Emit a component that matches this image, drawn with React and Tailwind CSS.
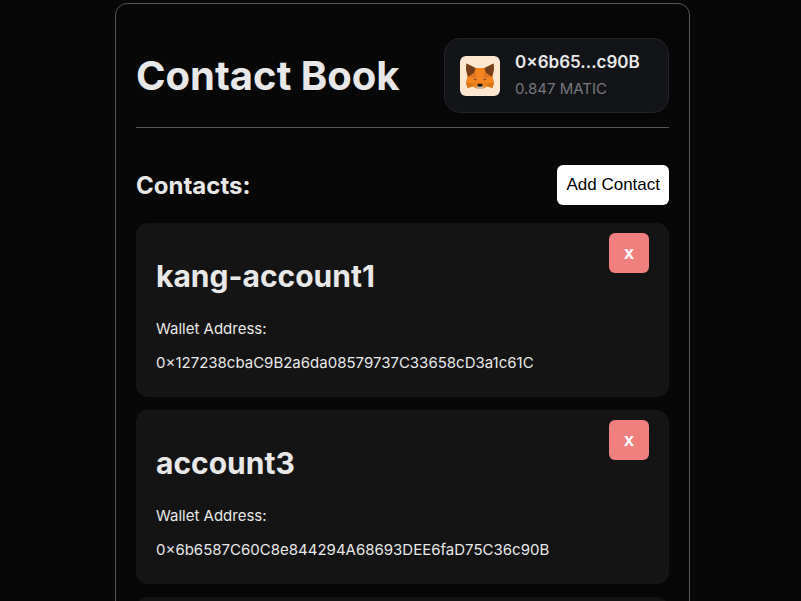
const contacts = [
  { name: 'kang-account1', address: '0×127238cbaC9B2a6da08579737C33658cD3a1c61C' },
  { name: 'account3', address: '0×6b6587C60C8e844294A68693DEE6faD75C36c90B' },
];

function FoxLogo() {
  return (
    <svg viewBox="0 0 40 40" className="size-10 shrink-0 rounded-md" role="img" aria-label="MetaMask">
      <rect width="40" height="40" fill="#ffe6ce" />
      <path d="M6.5 7.5 15.500 12h9L33.500 7.500 34 13l-1.500 8 1.500 6-1.500 5-5-1.500-4 2h-7l-4-2-5 1.500L6 27l1.500-6L6 13z" fill="#e8821e" />
      <path d="M15.500 12h9l-1 8 .5 6-1.500 5h-5L16 26l.5-6z" fill="#f5841f" />
      <path d="M6.500 7.500 15.500 12l-1.300 5-6.200 4-2-8zM33.500 7.500 24.500 12l1.300 5 6.200 4 2-8z" fill="#763e1a" />
      <path d="m14.200 17-6.200 4 7.500 1 1-3zM25.800 17l6.200 4-7.500 1-1-3z" fill="#e27625" />
      <path d="M7.500 21 6 27h8l1.500-4.500zM32.500 21l1.500 6h-8l-1.500-4.500z" fill="#f6851b" />
      <path d="M6 27h8l-1.500 3.500-5 1.500zM34 27h-8l1.500 3.500 5 1.500z" fill="#e2761b" />
      <path d="m13.500 22.800 3 .400v1l-2-.2zM26.500 22.800l-3 .400v1l2-.2z" fill="#6b4632" />
      <path d="M15.500 30.500 18 30h4l2.500.500-1.500 2h-6z" fill="#c0ad9e" />
      <path d="m17.800 27.800h4.400l.4 1.900-.9.800h-3.400l-.9-.8z" fill="#17171b" />
    </svg>
  );
}

function ContactCard({ name, address }) {
  return (
    <li className="flex items-start justify-between rounded-xl bg-[#141414] px-5 pt-[10px] pb-[25px]">
      <div className="pt-6">
        <h3 className="text-[30px] leading-[38px] font-bold">{name}</h3>
        <p className="mt-[25px] text-[15px] leading-[18px]">Wallet Address:</p>
        <p className="mt-4 text-[15px] leading-[18px]">{address}</p>
      </div>
      <button
        type="button"
        aria-label={`Delete ${name}`}
        className="size-10 shrink-0 rounded-md bg-[#f08080] font-['Liberation_Sans',Arial,sans-serif] text-lg font-bold text-white"
      >
        x
      </button>
    </li>
  );
}

export default function App() {
  return (
    <div className="min-h-screen bg-[#070707] pt-[3px] pl-1 font-['Inter',sans-serif] text-[#e8e8e8]">
      <main className="mx-auto max-w-[575px] rounded-xl border border-[#555] px-5 pt-[34px] pb-5">
        <header className="flex items-center justify-between border-b border-[#555] pb-[14px]">
          <h1 className="text-[40px] leading-[48px] font-bold">Contact Book</h1>
          <div className="flex w-[225px] items-center gap-[15px] rounded-2xl border border-[#23242b] bg-[#131418] px-[15px] py-[10px]">
            <FoxLogo />
            <div>
              <p className="text-[17px] leading-[26px] font-semibold">0×6b65...c90B</p>
              <p className="text-[15px] leading-[27px] text-[#77777f]">0.847 MATIC</p>
            </div>
          </div>
        </header>
        <section>
          <div className="mt-[37px] flex items-end justify-between">
            <h2 className="text-2xl leading-[38px] font-bold">Contacts:</h2>
            <button
              type="button"
              className="h-10 rounded-md bg-white px-[9px] font-['Liberation_Sans',Arial,sans-serif] text-[17px] text-black"
            >
              Add Contact
            </button>
          </div>
          <ul className="mt-[18px] flex flex-col gap-[13px]">
            {contacts.map((contact) => (
              <ContactCard key={contact.address} {...contact} />
            ))}
            <li aria-hidden="true" className="h-44 rounded-xl bg-[#141414]" />
          </ul>
        </section>
      </main>
    </div>
  );
}
